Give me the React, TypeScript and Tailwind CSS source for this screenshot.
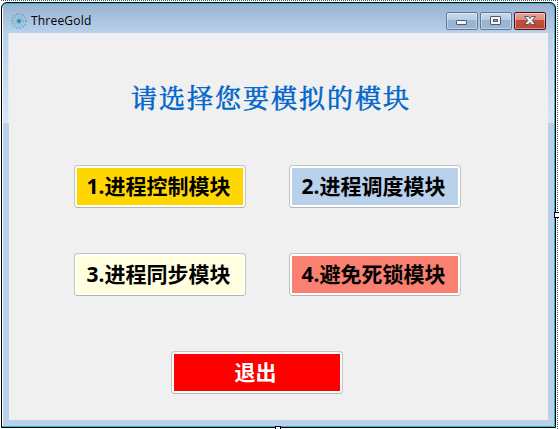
import type { ReactNode } from 'react';

const moduleFont = "font-['Noto_Sans','Noto_Sans_CJK_SC',sans-serif]";

function ModuleButton({ fill, color = 'text-black', children }: { fill: string; color?: string; children: ReactNode }) {
  return (
    <button className="h-[43px] w-[172px] rounded-[4px] border border-[#c4c4c4] border-b-[#b5b5b5] bg-white p-[2px]">
      <span className={`flex h-full w-full items-center justify-center pr-[3px] whitespace-nowrap text-[21px] leading-none font-bold ${moduleFont} ${fill} ${color}`}>
        {children}
      </span>
    </button>
  );
}

function CaptionButton({ close = false, label, children }: { close?: boolean; label: string; children: ReactNode }) {
  const look = close
    ? 'border-[#49111d] bg-linear-to-b from-[#e9a99b] from-0% via-[#d98b7d] via-45% to-[#d06a55]'
    : 'border-[#60779a] bg-linear-to-b from-[#c8daec] from-0% via-[#b5cce4] via-45% to-[#b0c9e2]';
  return (
    <button aria-label={label} className={`relative h-[18px] w-8 overflow-hidden rounded-[2px] border ${look}`}>
      <span className={`absolute inset-x-0 top-[7px] bottom-0 ${close ? 'bg-[#b83a24]/75' : 'bg-[#91aecb]/75'}`} />
      <span className="absolute inset-0 rounded-[1px] border border-white/40" />
      <svg className="absolute inset-0" width="30" height="16" viewBox="0 0 30 16">
        {children}
      </svg>
    </button>
  );
}

function AppIcon() {
  return (
    <svg width="16" height="16" viewBox="0 0 16 16" fill="none">
      <circle cx="8" cy="8" r="7" stroke="#4f9fc4" strokeWidth="1.5" strokeDasharray="1.7 1.3" opacity=".75" />
      <circle cx="8" cy="8" r="4.6" stroke="#79b8d2" strokeWidth="1.2" strokeDasharray="2 1.3" />
      <circle cx="8" cy="8" r="2.6" fill="#49a8c4" />
      <circle cx="8" cy="8" r="1" fill="#167894" />
    </svg>
  );
}

export default function App() {
  return (
    <div className="relative h-[429px] w-[559px] overflow-hidden bg-white pt-[2px] pl-px">
      <div className="absolute top-0 left-px h-px w-[557px] bg-[repeating-linear-gradient(90deg,#555_0_1px,#fff_1px_2px)]" />
      <div className="absolute top-0 left-[557px] h-[429px] w-px bg-[repeating-linear-gradient(180deg,#555_0_1px,#fff_1px_2px)]" />

      <main className="h-[426px] w-[555px] overflow-hidden rounded-t-[6px] border border-black bg-[#30b5cf] pt-px pr-px pb-px">
        <div className="h-full overflow-hidden rounded-t-[5px] border-l border-white bg-white">
          <div className="flex h-full flex-col bg-linear-to-b from-[#98b4d2] from-0% via-[#b9d1ea] via-[29px] to-[#b9d1ea]">
            <header className="flex h-[29px] shrink-0 justify-between pr-2 pl-2">
              <div className="flex h-[33px] items-center gap-1">
                <AppIcon />
                <span className="pt-px font-['Open_Sans','Noto_Sans',sans-serif] text-[12px] leading-none tracking-[0.2px] text-black">ThreeGold</span>
              </div>
              <div className="flex gap-[2px] pt-2">
                <CaptionButton label="最小化">
                  <rect x="9.5" y="7.5" width="10" height="4" rx=".5" fill="#f4f5f7" stroke="#52586a" />
                </CaptionButton>
                <CaptionButton label="最大化">
                  <rect x="9.5" y="3.5" width="10" height="8" rx=".5" fill="#f4f5f7" stroke="#52586a" />
                  <rect x="12.5" y="6.5" width="4" height="2" fill="#8cadd0" stroke="#52586a" />
                </CaptionButton>
                <CaptionButton close label="关闭">
                  <path d="M9.5 3.5h4l1.5 2 1.5-2h4l-3.4 4 3.4 4h-4L15 9.5l-1.5 2h-4l3.4-4z" fill="#f4f5f7" stroke="#52586a" />
                </CaptionButton>
              </div>
            </header>

            <div className="flex min-h-0 flex-1">
              <div className="w-[6px] shrink-0">
                <div className="h-[90px] border-r border-white/40 bg-linear-to-b from-[#b9d1ea] to-[#d5e5f5]" />
              </div>
              <section className="mb-[6px] flex w-[539px] shrink-0 flex-col items-start bg-[#f0f0f0]">
                <h1 className="mt-[50px] ml-[122px] h-7 whitespace-nowrap font-['Noto_Serif_CJK_SC','Noto_Sans_CJK_SC',serif] text-[26px] leading-7 font-normal tracking-[2px] text-[#0066cc] [-webkit-text-stroke:0.6px_#0066cc]">
                  请选择您要模拟的模块
                </h1>
                <div className="mt-[54px] ml-[65px] grid grid-cols-[172px_172px] gap-x-[43px] gap-y-[45px]">
                  <ModuleButton fill="bg-[#ffd700]">1.进程控制模块</ModuleButton>
                  <ModuleButton fill="bg-[#b9d1ea]">2.进程调度模块</ModuleButton>
                  <ModuleButton fill="bg-[#ffffe0]">3.进程同步模块</ModuleButton>
                  <ModuleButton fill="bg-[#fa8072]">4.避免死锁模块</ModuleButton>
                </div>
                <div className="mt-[55px] ml-[162px]">
                  <ModuleButton fill="bg-[#ff0000]" color="text-white">退出</ModuleButton>
                </div>
              </section>
              <div className="w-[6px] shrink-0">
                <div className="h-[90px] border-r border-white/40 bg-linear-to-b from-[#b9d1ea] to-[#d5e5f5]" />
              </div>
            </div>
          </div>
        </div>
      </main>

      <span className="absolute top-[212px] left-[554px] h-[6px] w-[6px] border border-black bg-white" />
      <span className="absolute top-[426px] left-[275px] h-[6px] w-[6px] border border-black bg-white" />
    </div>
  );
}
